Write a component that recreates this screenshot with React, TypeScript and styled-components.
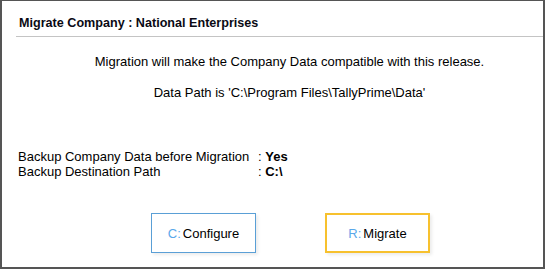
import styled, { createGlobalStyle } from "styled-components";

const GlobalStyle = createGlobalStyle`
  body {
    margin: 0;
    background: #fff;
    font-family: "Liberation Sans", Arial, sans-serif;
  }
`;

const Frame = styled.div`
  box-sizing: border-box;
  width: 545px;
  height: 269px;
  border: 2px solid #555;
  border-top-width: 1px;
  background: #fff;
  color: #000;
  font-size: 13px;
  line-height: 15px;
`;

const Title = styled.div`
  margin-left: 14px;
  padding: 15px 0 5px 3px;
  border-bottom: 1px solid #c4c4c4;
  font-size: 12.6px;
  font-weight: 700;
  color: #0a0a14;
`;

const Message = styled.div<{ $gap: number }>`
  margin-top: ${(p) => p.$gap}px;
  padding-left: 34px;
  text-align: center;
`;

const Fields = styled.div`
  margin-top: 49px;
  padding-left: 16px;
  display: grid;
  grid-template-columns: 240px auto;
`;

const Value = styled.span`
  font-weight: 700;
  &::before {
    content: ": ";
    font-weight: 400;
  }
`;

const Actions = styled.div`
  margin-top: 34px;
  padding-left: 149px;
  display: flex;
  gap: 69px;
`;

const Button = styled.div<{ $active?: boolean }>`
  box-sizing: border-box;
  width: 105px;
  height: 40px;
  display: flex;
  align-items: center;
  justify-content: center;
  border: ${(p) => (p.$active ? "2px solid #f7c12e" : "1px solid #5a9fd6")};
  box-shadow: 2px 2px 3px rgba(0, 0, 0, 0.08);
  background: #fff;
`;

const Key = styled.span`
  color: #5aa8ea;
  margin-right: 2px;
`;

export default function App() {
  return (
    <>
      <GlobalStyle />
      <Frame>
        <Title>Migrate Company : National Enterprises</Title>
        <Message $gap={17}>
          Migration will make the Company Data compatible with this release.
        </Message>
        <Message $gap={16}>
          Data Path is 'C:\Program Files\TallyPrime\Data'
        </Message>
        <Fields>
          <span>Backup Company Data before Migration</span>
          <Value>Yes</Value>
          <span>Backup Destination Path</span>
          <Value>C:\</Value>
        </Fields>
        <Actions>
          <Button>
            <Key>C:</Key>Configure
          </Button>
          <Button $active>
            <Key>R:</Key>Migrate
          </Button>
        </Actions>
      </Frame>
    </>
  );
}
